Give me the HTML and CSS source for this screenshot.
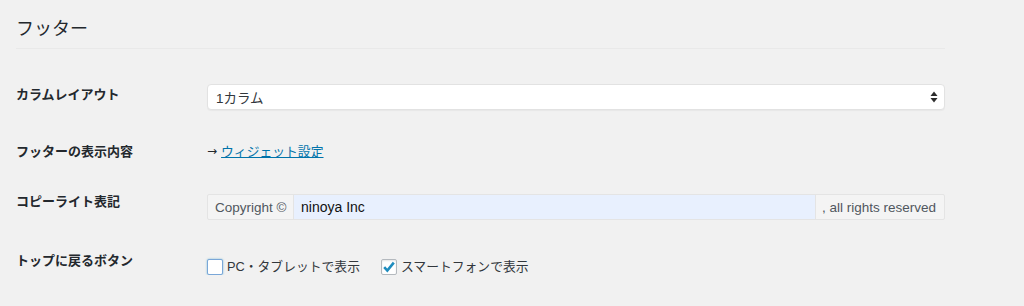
FILE: index.html
```html
<!DOCTYPE html>
<html lang="ja">
<head>
<meta charset="utf-8">
<title>フッター</title>
<link rel="stylesheet" href="styles.css">
</head>
<body>
<div class="page">
  <h2 class="title">フッター</h2>
  <div class="rows">
    <div class="row row-select">
      <div class="label">カラムレイアウト</div>
      <div class="field">
        <div class="select">
          <span class="select-value">1カラム</span>
          <svg class="select-arrows" width="8" height="12" viewBox="0 0 8 12"><path d="M4 0.5 L7.5 5 L0.5 5 Z" fill="#2c2c2c"/><path d="M4 11.5 L7.5 7 L0.5 7 Z" fill="#2c2c2c"/></svg>
        </div>
      </div>
    </div>
    <div class="row row-link">
      <div class="label">フッターの表示内容</div>
      <div class="field"><span class="arrow">→</span><a class="link" href="#">ウィジェット設定</a></div>
    </div>
    <div class="row row-group">
      <div class="label">コピーライト表記</div>
      <div class="field">
        <div class="group">
          <span class="addon addon-pre">Copyright ©</span>
          <span class="group-input">ninoya Inc</span>
          <span class="addon addon-post">, all rights reserved</span>
        </div>
      </div>
    </div>
    <div class="row row-check">
      <div class="label">トップに戻るボタン</div>
      <div class="field checks">
        <label class="check"><span class="box box-focus"></span><span class="check-text">PC・タブレットで表示</span></label>
        <label class="check"><span class="box"><svg width="14" height="14" viewBox="0 0 14 14"><path d="M2.2 7.2 L5.3 10.6 L11.8 2.6" fill="none" stroke="#1e8cbe" stroke-width="2.6" stroke-linejoin="miter"/></svg></span><span class="check-text">スマートフォンで表示</span></label>
      </div>
    </div>
  </div>
</div>
</body>
</html>
```
FILE: styles.css
```css
html, body {
  margin: 0;
  padding: 0;
  background: #f1f1f1;
}
body {
  font-family: "Liberation Sans", "Noto Sans CJK JP", sans-serif;
  color: #23282d;
  font-size: 13px;
}
.page {
  padding: 0 0 0 16px;
  width: 929px;
}
.title {
  margin: 0;
  padding-top: 15px;
  height: 49px;
  box-sizing: border-box;
  font-family: "Noto Sans CJK JP", sans-serif;
  font-size: 18px;
  line-height: 24px;
  font-weight: 400;
  color: #23282d;
  border-bottom: 1px solid #e9e9e9;
}
.rows {
  display: flex;
  flex-direction: column;
  padding-top: 35px;
}
.row {
  display: grid;
  grid-template-columns: 191px 1fr;
  align-items: start;
}
.label {
  font-family: "Noto Sans CJK JP", sans-serif;
  font-weight: 700;
  font-size: 13px;
  line-height: 18px;
  color: #23282d;
}
.row-select .label { padding-top: 1px; }
.row-link { margin-top: 32px; }
.row-group { margin-top: 32px; }
.row-group .field { padding-top: 2px; }
.row-check { margin-top: 31px; }
.row-check .field { padding-top: 8px; }

.select {
  height: 26px;
  box-sizing: border-box;
  background: #fff;
  border: 1px solid #e2e2e2;
  border-radius: 4px;
  box-shadow: 0 1px 1px rgba(0,0,0,.04);
  display: flex;
  align-items: center;
  justify-content: space-between;
  padding: 0 6px 0 8px;
}
.select-value {
  font-family: "Liberation Sans", "Noto Sans CJK JP", sans-serif;
  font-size: 13.5px;
  color: #32373c;
}
.select-arrows { display: block; }

.row-link .field {
  line-height: 18px;
  font-family: "Noto Sans CJK JP", sans-serif;
  font-size: 12.8px;
  display: flex;
  align-items: center;
}
.arrow {
  font-family: "DejaVu Sans", sans-serif;
  font-size: 12px;
  color: #23282d;
  margin-right: 4px;
}
.link {
  color: #0073aa;
  text-decoration: underline;
}

.group {
  display: flex;
  height: 26px;
  box-sizing: border-box;
  border: 1px solid #e4e4e4;
  border-radius: 2px;
  background: #f4f4f4;
}
.addon {
  display: flex;
  align-items: center;
  white-space: nowrap;
  color: #50575e;
  font-size: 13.5px;
  padding: 0 7px;
}
.addon-pre {
  width: 86px;
  box-sizing: border-box;
  border-right: 1px solid #e4e4e4;
}
.addon-post {
  width: 129px;
  box-sizing: border-box;
  border-left: 1px solid #e4e4e4;
  padding-left: 6px;
}
.group-input {
  flex: 1;
  display: flex;
  align-items: center;
  background: #e8f0fe;
  color: #111;
  font-size: 14px;
  padding: 0 7px;
}

.checks {
  display: flex;
  align-items: center;
  gap: 21px;
}
.check {
  display: flex;
  align-items: center;
  gap: 4px;
  font-family: "Noto Sans CJK JP", sans-serif;
  font-size: 12.8px;
  line-height: 16px;
  color: #32373c;
}
.check-text { font-family: "Liberation Sans", "Noto Sans CJK JP", sans-serif; }
.box {
  width: 16px;
  height: 16px;
  box-sizing: border-box;
  border: 1px solid #b4b9be;
  background: #fff;
  border-radius: 2px;
  box-shadow: inset 0 1px 2px rgba(0,0,0,.1);
  display: flex;
  align-items: center;
  justify-content: center;
}
.box-focus {
  border-color: #7aa7d8;
  box-shadow: 0 0 2px rgba(30,140,190,.6);
}
```
